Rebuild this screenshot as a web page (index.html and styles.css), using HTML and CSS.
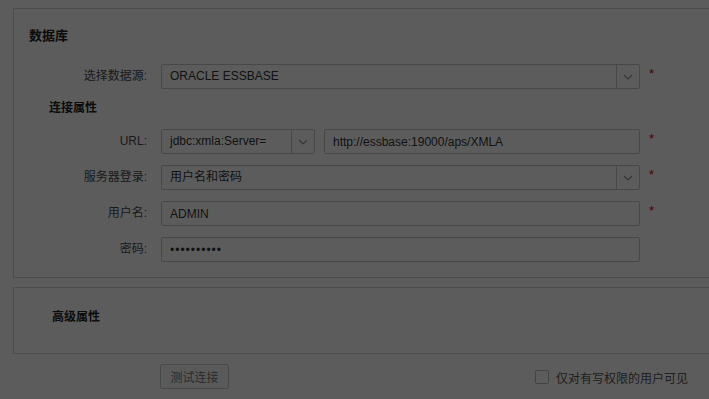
FILE: index.html
```html
<!DOCTYPE html>
<html>
<head>
    <title>数据库连接</title>
    <link rel="stylesheet" href="styles.css">
</head>
<body>
    <div class="panel db-panel">
        <h2>数据库</h2>

        <div class="row">
            <label class="row-label">选择数据源:</label>
            <div class="select wide">
                <span class="select-text">ORACLE ESSBASE</span>
                <span class="select-arrow"><svg width="10" height="6" viewBox="0 0 10 6"><path d="M1 1 L5 5 L9 1" fill="none" stroke="#9a9a9a" stroke-width="1.2"/></svg></span>
            </div>
            <span class="required">*</span>
        </div>

        <h3>连接属性</h3>

        <div class="row">
            <label class="row-label">URL:</label>
            <div class="select url-prefix">
                <span class="select-text">jdbc:xmla:Server=</span>
                <span class="select-arrow"><svg width="10" height="6" viewBox="0 0 10 6"><path d="M1 1 L5 5 L9 1" fill="none" stroke="#9a9a9a" stroke-width="1.2"/></svg></span>
            </div>
            <input class="field url-field" type="text" value="http://essbase:19000/aps/XMLA">
            <span class="required">*</span>
        </div>

        <div class="row">
            <label class="row-label">服务器登录:</label>
            <div class="select wide">
                <span class="select-text">用户名和密码</span>
                <span class="select-arrow"><svg width="10" height="6" viewBox="0 0 10 6"><path d="M1 1 L5 5 L9 1" fill="none" stroke="#9a9a9a" stroke-width="1.2"/></svg></span>
            </div>
            <span class="required">*</span>
        </div>

        <div class="row">
            <label class="row-label">用户名:</label>
            <input class="field wide" type="text" value="ADMIN">
            <span class="required">*</span>
        </div>

        <div class="row">
            <label class="row-label">密码:</label>
            <input class="field wide pwd" type="password" value="adminadmin">
        </div>
    </div>

    <div class="panel adv-panel">
        <h3>高级属性</h3>
    </div>

    <div class="actions">
        <button class="test-btn">测试连接</button>
        <label class="check">
            <span class="check-box"></span>
            仅对有写权限的用户可见
        </label>
    </div>

    <div class="mask"></div>
</body>
</html>
```

FILE: styles.css
```css
body {
    margin: 0;
    background: #fff;
    font-family: "Liberation Sans", "Noto Sans CJK SC", sans-serif;
    font-size: 12px;
    color: #333;
    overflow: hidden;
    height: 399px;
}
.panel {
    margin: 0 -1px 0 13px;
    border: 1px solid #d4d4d4;
    background: #fff;
}
.db-panel {
    margin-top: 8px;
    padding: 17px 0 15px 15px;
}
h2 {
    margin: 0 0 18px 0;
    font-size: 13px;
    line-height: 20px;
    font-weight: bold;
    color: #222;
}
h3 {
    margin: 8px 0 13px 20px;
    font-size: 12px;
    line-height: 16px;
    font-weight: bold;
    color: #222;
}
.row {
    display: flex;
    align-items: flex-start;
    height: 25px;
    margin-bottom: 11px;
}
.row:last-child {
    margin-bottom: 0;
}
.row-label {
    width: 118px;
    margin-right: 14px;
    text-align: right;
    line-height: 25px;
    color: #4a4a4a;
}
.select {
    display: flex;
    box-sizing: border-box;
    height: 25px;
    border: 1px solid #c8c8c8;
    border-radius: 2px;
    background: #fff;
}
.select-text {
    flex: 1;
    padding-left: 8px;
    line-height: 23px;
    white-space: nowrap;
    overflow: hidden;
}
.select-arrow {
    width: 22px;
    border-left: 1px solid #c8c8c8;
    display: flex;
    align-items: center;
    justify-content: center;
}
.wide {
    width: 479px;
}
.url-prefix {
    width: 154px;
    margin-right: 9px;
}
.field {
    box-sizing: border-box;
    height: 25px;
    margin: 0;
    padding: 0 8px;
    border: 1px solid #c8c8c8;
    border-radius: 2px;
    font-family: inherit;
    font-size: 12px;
    color: #333;
    outline: none;
}
.pwd {
    letter-spacing: 1px;
}
.url-field {
    width: 316px;
}
.required {
    margin-left: 9px;
    margin-top: 3px;
    color: #e00000;
    font-size: 13px;
    line-height: 14px;
}
.adv-panel {
    margin-top: 9px;
    height: 65px;
}
.adv-panel h3 {
    margin: 19px 0 0 38px;
    line-height: 20px;
    font-size: 12px;
}
.actions {
    display: flex;
    align-items: center;
    margin-top: 10px;
    padding-left: 160px;
    padding-right: 21px;
}
.test-btn {
    width: 69px;
    height: 25px;
    background: #fafafa;
    border: 1px solid #c8c8c8;
    border-radius: 2px;
    font-family: inherit;
    font-size: 12px;
    color: #777;
    padding: 0;
}
.check {
    margin-left: auto;
    display: flex;
    align-items: center;
    color: #555;
    margin-top: 1px;
}
.check-box {
    width: 12px;
    height: 12px;
    border: 1px solid #bbb;
    border-radius: 2px;
    background: #fff;
    margin-right: 7px;
}
.mask {
    position: fixed;
    top: 0;
    left: 0;
    right: 0;
    bottom: 0;
    background: rgba(0, 0, 0, 0.64);
}
```
